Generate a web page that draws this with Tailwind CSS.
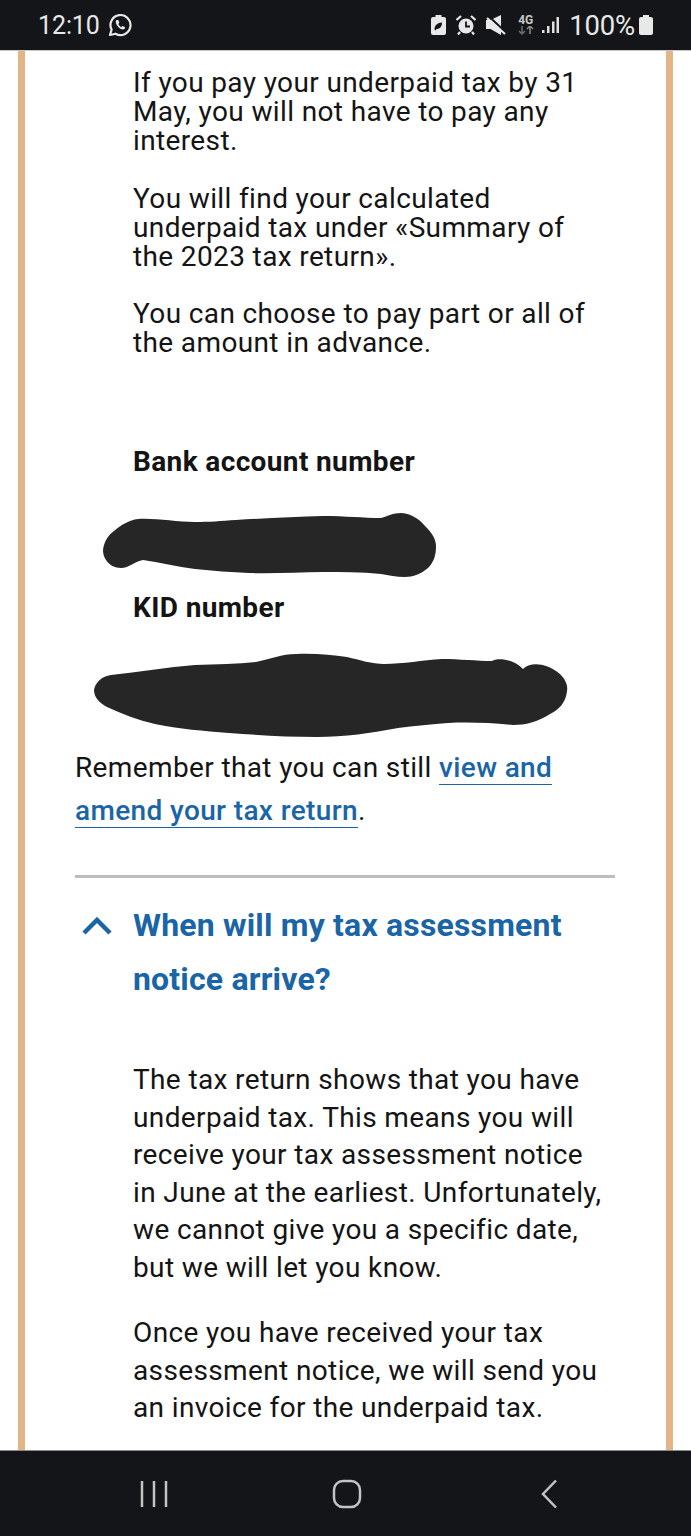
<!DOCTYPE html>
<html lang="en">
<head>
    <meta charset="UTF-8">
    <meta name="viewport" content="width=device-width, initial-scale=1"/>
    <title>Tax return</title>
    <script src="https://cdn.jsdelivr.net/npm/@tailwindcss/browser@4"></script>
</head>

<body class="bg-white text-[#141414] font-['Roboto',sans-serif]">

<div class="h-[1536px] w-[691px] flex flex-col overflow-hidden">

    <!-- Status bar -->
    <header class="h-[51px] shrink-0 bg-[#131519] border-b border-[#c9c9c9] flex items-center justify-between pl-[38px] pr-[38px] text-[#e8e8e8]">
        <div class="flex items-center gap-[8px]">
            <span class="text-[25px] leading-none tracking-[-0.1px] pt-[1px]">12:10</span>
            <svg width="24" height="24" viewBox="0 0 24 24" fill="none" stroke="#e8e8e8" stroke-width="2.200">
                <path d="M2 22l1.600-5.400A10 10 0 1 1 7.500 20.700z" stroke-linejoin="round"/>
                <path d="M8.500 7c-1.200 1-1.100 3 .6 5.500 1.700 2.400 4 4 5.900 4 1.200 0 2.200-.9 2.200-2.200l-2.600-1.300-1.100 1.100c-1.300-.5-2.500-1.800-3.100-3.200l1-1.100-1.100-2.800z" fill="#e8e8e8" stroke="none"/>
            </svg>
        </div>
        <div class="flex items-center">
            <!-- battery saver -->
            <svg width="15" height="20" viewBox="0 0 15 20" class="mr-[10px]">
                <path d="M4.500 0h6v2H13a2 2 0 0 1 2 2v14a2 2 0 0 1-2 2H2a2 2 0 0 1-2-2V4a2 2 0 0 1 2-2h2.500z" fill="#e8e8e8"/>
                <path d="M3.500 14.500c0-4 3-7 7.500-7 0 4-2 6.500-5.500 6.500l-1 1.500z" fill="#131519"/>
            </svg>
            <!-- alarm -->
            <svg width="20" height="20" viewBox="0 0 20 20" class="mr-[10px]">
                <circle cx="10" cy="11" r="7.500" fill="#e8e8e8"/>
                <path d="M10 6.500V11.500H14" stroke="#131519" stroke-width="1.800" fill="none"/>
                <path d="M0.500 5L5 1M19.500 5L15 1M4 17l-2 2.500M16 17l2 2.500" stroke="#e8e8e8" stroke-width="2.200"/>
            </svg>
            <!-- muted -->
            <svg width="20" height="20" viewBox="0 0 20 20" class="mr-[11px]">
                <path d="M0 5h4.500L15 0v20L4.500 14H0z" fill="#e8e8e8"/>
                <path d="M3 1.500l16 15" stroke="#131519" stroke-width="2"/>
                <path d="M1 3l18 16" stroke="#e8e8e8" stroke-width="2.200"/>
            </svg>
            <!-- 4G -->
            <div class="flex flex-col items-center mr-[8px] w-[17px]">
                <span class="text-[12px] leading-[11px] font-bold text-[#c8c8c8]">4G</span>
                <svg width="16" height="9" viewBox="0 0 16 9">
                    <path d="M4 0v8M1 5l3 3 3-3" stroke="#6e6e6e" stroke-width="1.500" fill="none"/>
                    <path d="M12 8V0M9 3l3-3 3 3" stroke="#8c8c8c" stroke-width="1.500" fill="none"/>
                </svg>
            </div>
            <!-- signal -->
            <svg width="17" height="18" viewBox="0 0 17 18" class="mr-[10px]" fill="#e0e0e0">
                <rect x="0" y="14" width="2.500" height="3"/>
                <rect x="5" y="10" width="2.500" height="7"/>
                <rect x="10" y="5.500" width="2.500" height="11.500"/>
                <rect x="14.500" y="1" width="2.500" height="16"/>
            </svg>
            <span class="text-[27.500px] leading-none mr-[4px] tracking-[-0.2px] pt-[1px]">100%</span>
            <svg width="14" height="20" viewBox="0 0 14 20" fill="#e8e8e8">
                <path d="M4 0h6v2h2a2 2 0 0 1 2 2v14a2 2 0 0 1-2 2H2a2 2 0 0 1-2-2V4a2 2 0 0 1 2-2h2z"/>
            </svg>
        </div>
    </header>

    <!-- Page content, between the two tan stripes -->
    <main class="flex-1 min-h-0 mx-[18px] border-x-[7px] border-[#e3b486] bg-white overflow-hidden pl-[50px] pr-[51px]">

        <section class="pl-[58px] pt-[17px] text-[28px] leading-[29px] tracking-[0.37px]">
            <p>If you pay your underpaid tax by 31<br>May, you will not have to pay any<br>interest.</p>
            <p class="mt-[29px]">You will find your calculated<br>underpaid tax under «Summary of<br>the 2023 tax return».</p>
            <p class="mt-[28px]">You can choose to pay part or all of<br>the amount in advance.</p>
        </section>

        <section class="pl-[58px] mt-[90px]">
            <h3 class="text-[28px] leading-[29px] font-bold tracking-[0.37px]">Bank account number</h3>
        </section>

        <!-- Scribbled-out account number -->
        <svg width="340" height="70" viewBox="0 0 340 70" class="block ml-[26px] mt-[34px]" fill="#262626">
            <path d="M2 40C3 32 7 25 13 21 C20 15 28 10 37 9 C55 8 75 12 94 12 C108 12 120 11 135 10 C165 8 195 7 222 6 C245 6 262 8 280 8 C287 6 292 3 300 3 C312 4 319 10 324 16 C331 23 335 29 335 36 C335 45 333 52 327 58 C320 64 312 67 304 67 C295 67 288 65 280 64 C260 62 240 62 222 62 C198 62 172 64 148 63 C130 62 112 61 94 59 C76 57 58 52 42 50 C34 51 28 58 20 58 C14 58 8 55 5 50 C3 47 2 44 2 40z"/>
        </svg>

        <section class="pl-[58px] mt-[13px]">
            <h3 class="text-[28px] leading-[29px] font-bold tracking-[0.37px]">KID number</h3>
        </section>

        <!-- Scribbled-out KID -->
        <svg width="476" height="90" viewBox="0 0 476 90" class="block ml-[17px] mt-[28px]" fill="#262626">
            <path d="M2 40C3 33 10 26 19 25 C47 22 75 17 103 15 C125 14 145 14 164 12 C178 9 190 4 204 4 C222 3 240 5 255 7 C268 10 280 14 292 14 C312 14 330 10 350 9 C367 9 385 11 400 11 C405 8 420 8 431 19 C437 13 452 11 468 24 C474 30 476 36 475 41 C474 52 467 60 458 64 C446 72 433 75 421 75 C400 73 378 72 356 73 C340 74 322 76 306 78 C280 83 252 87 225 87 C195 87 165 85 137 83 C112 81 87 79 63 74 C46 70 30 64 15 57 C8 53 2 48 2 40z"/>
        </svg>

        <p class="text-[28px] leading-[43px] mt-[6px] tracking-[0.37px]">
            Remember that you can still <a href="#" class="font-medium text-[#1a65a6] border-b border-[#1a65a6]">view and amend your tax return</a>.
        </p>

        <hr class="border-0 h-[3px] bg-[#bdbdbd] mt-[43px]">

        <!-- Accordion -->
        <section class="flex mt-[20px]">
            <svg width="30" height="18" viewBox="0 0 30 18" class="ml-[7px] mt-[19px] shrink-0" fill="none" stroke="#1a65a6" stroke-width="4.500">
                <path d="M2 16L15 3l13 13"/>
            </svg>
            <h2 class="ml-[21px] text-[32px] leading-[54px] font-bold text-[#1a65a6] tracking-[0.18px]">When will my tax assessment notice arrive?</h2>
        </section>

        <section class="pl-[58px] pr-[10px] mt-[55px] text-[28px] leading-[37.500px] tracking-[0.37px]">
            <p>The tax return shows that you have underpaid tax. This means you will receive your tax assessment notice in June at the earliest. Unfortunately, we cannot give you a specific date, but we will let you know.</p>
            <p class="mt-[28px]">Once you have received your tax assessment notice, we will send you an invoice for the underpaid tax.</p>
        </section>
    </main>

    <!-- Navigation bar -->
    <nav class="h-[86px] shrink-0 bg-[#131519] border-t border-[#8a8a8a] relative flex items-center text-[#c4c4c4]">
        <svg width="28" height="28" viewBox="0 0 28 28" class="ml-[140px]" stroke="#c4c4c4" stroke-width="2.500">
            <path d="M2 1v26M14 1v26M26 1v26"/>
        </svg>
        <svg width="30" height="30" viewBox="0 0 30 30" class="ml-[164px]" fill="none" stroke="#c4c4c4" stroke-width="2.500">
            <rect x="2" y="2" width="26" height="26" rx="9"/>
        </svg>
        <svg width="18" height="30" viewBox="0 0 18 30" class="ml-[178px]" fill="none" stroke="#c4c4c4" stroke-width="2.500">
            <path d="M16 1.500L3 15l13 13.500"/>
        </svg>
    </nav>

</div>

</body>
</html>
